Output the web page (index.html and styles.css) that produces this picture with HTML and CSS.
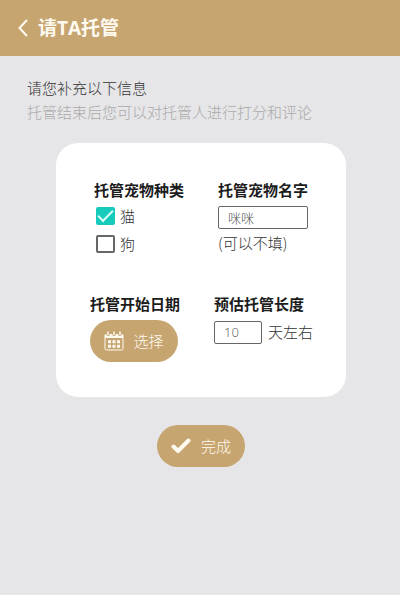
FILE: index.html
```
<!DOCTYPE html>
<html lang="zh-CN">
<head>
  <meta charset="UTF-8" />
  <meta name="viewport" content="width=device-width, initial-scale=1.0"/>
  <title>请TA托管</title>
  <link rel="stylesheet" href="styles.css">
</head>
<body>
  <header class="top-bar">
    <a href="#" class="back" aria-label="返回">
      <svg width="10" height="18" viewBox="0 0 10 18" fill="none" stroke="currentColor" stroke-width="2">
        <path d="M9 1 1.5 9 9 17"/>
      </svg>
    </a>
    <h1>请TA托管</h1>
  </header>

  <main>
    <div class="intro">
      <p>请您补充以下信息</p>
      <p class="hint">托管结束后您可以对托管人进行打分和评论</p>
    </div>

    <form>
      <div class="card">
        <div class="row">
          <fieldset class="field">
            <legend class="field-title">托管宠物种类</legend>
            <label class="check"><input type="checkbox" checked />猫</label>
            <label class="check"><input type="checkbox" />狗</label>
          </fieldset>
          <div class="field">
            <label class="field-title" for="petName">托管宠物名字</label>
            <input class="text-box name-box" id="petName" type="text" value="咪咪" />
            <span class="note">(可以不填)</span>
          </div>
        </div>

        <div class="row row-date">
          <div class="field">
            <span class="field-title" id="dateTitle">托管开始日期</span>
            <button class="pill date-button" type="button" aria-describedby="dateTitle">
              <svg width="20" height="20" viewBox="0 0 20 20" fill="none" stroke="currentColor">
                <path d="M1 7V17.5Q1 19 2.5 19H17.5Q19 19 19 17.5V7"/>
                <path fill="currentColor" stroke="none" d="M.5 7V4.5Q.5 3 2 3L3.5 5H5L6 3H8L9.2 5H10.8L12 3H14L15 5H16.5L18 3Q19.5 3 19.5 4.5V7Z"/>
                <path stroke-width="1.5" stroke-linecap="round" d="M4 1V3.5M10 1V3.5M16 1V3.5"/>
                <path stroke-width="3" stroke-dasharray="3 1.5" d="M4 10.8H16M4 15.2H16"/>
              </svg>
              选择
            </button>
          </div>
          <div class="field">
            <label class="field-title" for="days">预估托管长度</label>
            <div class="days">
              <input class="text-box days-box" id="days" type="text" inputmode="numeric" value="10" />
              <span>天左右</span>
            </div>
          </div>
        </div>
      </div>

      <button class="pill done-button" type="submit">
        <svg width="20" height="16" viewBox="0 0 20 16" fill="none" stroke="currentColor" stroke-width="4" stroke-linecap="round" stroke-linejoin="round">
          <path d="M2.5 8.5 7 13 17.5 2.5"/>
        </svg>
        完成
      </button>
    </form>
  </main>
</body>
</html>
```
FILE: styles.css
```
* {
  box-sizing: border-box;
}

body {
  margin: 0;
  min-height: 100vh;
  font-family: "Noto Sans CJK SC", sans-serif;
  font-size: 15px;
  font-weight: 300;
  line-height: 24px;
  background-color: #e6e5e7;
  color: #333;
}

.top-bar {
  height: 56px;
  padding: 0 18px;
  display: flex;
  align-items: center;
  gap: 10px;
  background-color: #c6a570;
  color: #fffaf0;
}

.back {
  display: flex;
  color: inherit;
}

h1 {
  margin: 0;
  font-family: "Open Sans", "Noto Sans CJK SC", sans-serif;
  font-size: 19px;
  font-weight: bold;
}

.intro {
  padding: 20px 27px 19px;
}

.intro p {
  margin: 0;
}

.intro .hint {
  color: #aaa;
}

form {
  display: flex;
  flex-direction: column;
  align-items: center;
  padding: 0 54px 28px 56px;
}

.card {
  width: 100%;
  padding: 35px 0 35px 34px;
  display: flex;
  flex-direction: column;
  gap: 34px;
  background-color: #fff;
  border-radius: 22px;
}

.row {
  display: grid;
  grid-template-columns: 124px 1fr;
  padding-left: 4px;
}

.row-date {
  padding-left: 0;
}

.field {
  min-width: 0;
  margin: 0;
  padding: 0;
  border: none;
}

.field-title {
  display: block;
  padding: 0;
  font-weight: bold;
  color: #1c1c1c;
}

.check {
  display: flex;
  align-items: center;
  gap: 5px;
  height: 28px;
  padding-left: 2px;
}

.check input {
  appearance: none;
  width: 19px;
  height: 18px;
  margin: 0;
  border: 2px solid #666;
  border-radius: 2px;
}

.check input:checked {
  display: flex;
  align-items: center;
  justify-content: center;
  background-color: #16cbbb;
  border-color: #16cbbb;
}

.check input:checked::before {
  content: "";
  width: 13px;
  height: 6px;
  border: solid #d8fffa;
  border-width: 0 0 2px 2px;
  transform: translateY(-2px) rotate(-45deg);
}

.text-box {
  height: 23px;
  padding: 0 9px;
  border: 1px solid #666;
  border-radius: 2px;
  background-color: #fff;
  font: inherit;
  font-family: "Open Sans", "Noto Sans CJK SC", sans-serif;
  font-size: 13px;
  color: #555;
}

.name-box {
  display: block;
  width: 90px;
  margin-top: 4px;
}

.note {
  display: block;
  line-height: 28px;
}

.days {
  display: flex;
  align-items: center;
  gap: 6px;
  margin-top: 4px;
}

.days-box {
  width: 48px;
}

.pill {
  display: flex;
  align-items: center;
  justify-content: center;
  width: 88px;
  height: 42px;
  padding: 0;
  border: none;
  border-radius: 21px;
  background-color: #c6a570;
  color: #fffaf0;
  font: inherit;
  cursor: pointer;
}

.date-button {
  gap: 9px;
  margin-top: 4px;
}

.done-button {
  gap: 10px;
  margin-top: 28px;
}
```
